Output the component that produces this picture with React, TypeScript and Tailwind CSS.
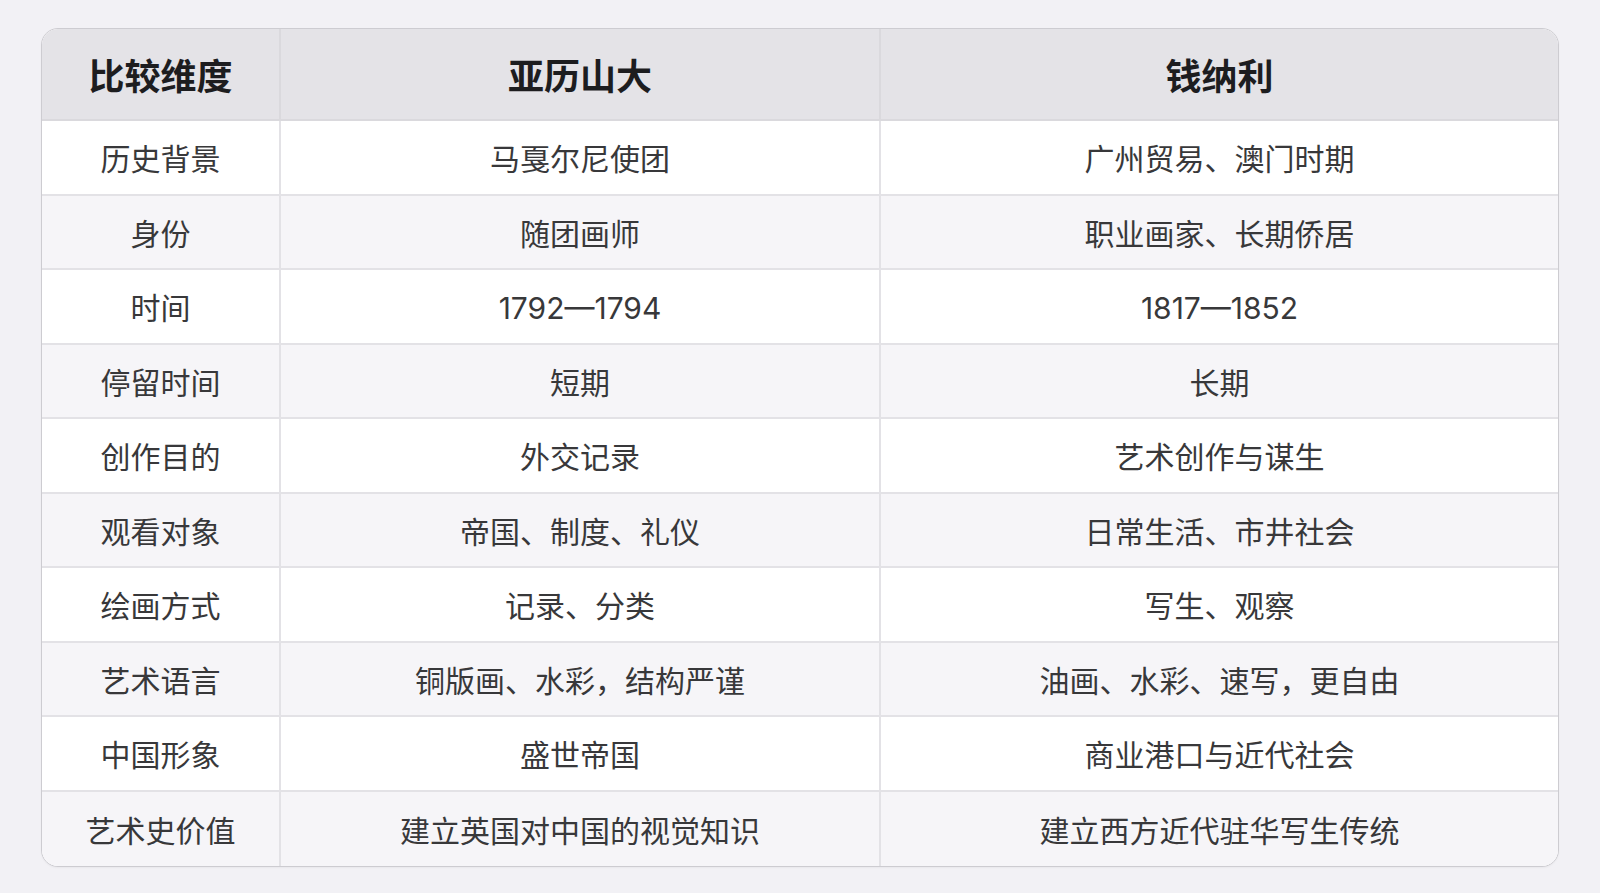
const rows: [string, string, string][] = [
  ["历史背景", "马戛尔尼使团", "广州贸易、澳门时期"],
  ["身份", "随团画师", "职业画家、长期侨居"],
  ["时间", "1792—1794", "1817—1852"],
  ["停留时间", "短期", "长期"],
  ["创作目的", "外交记录", "艺术创作与谋生"],
  ["观看对象", "帝国、制度、礼仪", "日常生活、市井社会"],
  ["绘画方式", "记录、分类", "写生、观察"],
  ["艺术语言", "铜版画、水彩，结构严谨", "油画、水彩、速写，更自由"],
  ["中国形象", "盛世帝国", "商业港口与近代社会"],
  ["艺术史价值", "建立英国对中国的视觉知识", "建立西方近代驻华写生传统"],
]

export default function App() {
  return (
    <div
      className="w-full h-[893px] bg-[#f2f1f5] pt-[28px]"
      style={{ fontFamily: '"Inter", "Noto Sans CJK SC", sans-serif' }}
    >
      <div className="mx-auto w-[1518px] rounded-[17px] border border-[#cdccd1] overflow-hidden bg-white shadow-[0_1px_2px_rgba(0,0,0,0.04)]">
        {/* header */}
        <div className="grid grid-cols-[239px_600px_1fr] h-[92px] bg-[#e4e3e7] border-b-2 border-[#dad9dd] text-[#1d1d1f] text-[36px] font-bold">
          <div className="flex items-center justify-center pt-[5px] border-r-2 border-[#dad9dd]">比较维度</div>
          <div className="flex items-center justify-center pt-[5px] border-r-2 border-[#dad9dd]">亚历山大</div>
          <div className="flex items-center justify-center pt-[5px]">钱纳利</div>
        </div>

        {rows.map((r, i) => (
          <div
            key={r[0]}
            className={
              "grid grid-cols-[239px_600px_1fr] h-[74.5px] text-[30px] text-[#38383a] " +
              (i % 2 === 0 ? "bg-white" : "bg-[#f6f5f8]") +
              (i < rows.length - 1 ? " border-b-2 border-[#e3e2e6]" : "")
            }
          >
            <div className="flex items-center justify-center pt-[5px] border-r-2 border-[#e3e2e6]">{r[0]}</div>
            <div className="flex items-center justify-center pt-[5px] border-r-2 border-[#e3e2e6]">{r[1]}</div>
            <div className="flex items-center justify-center pt-[5px]">{r[2]}</div>
          </div>
        ))}
      </div>
    </div>
  )
}
